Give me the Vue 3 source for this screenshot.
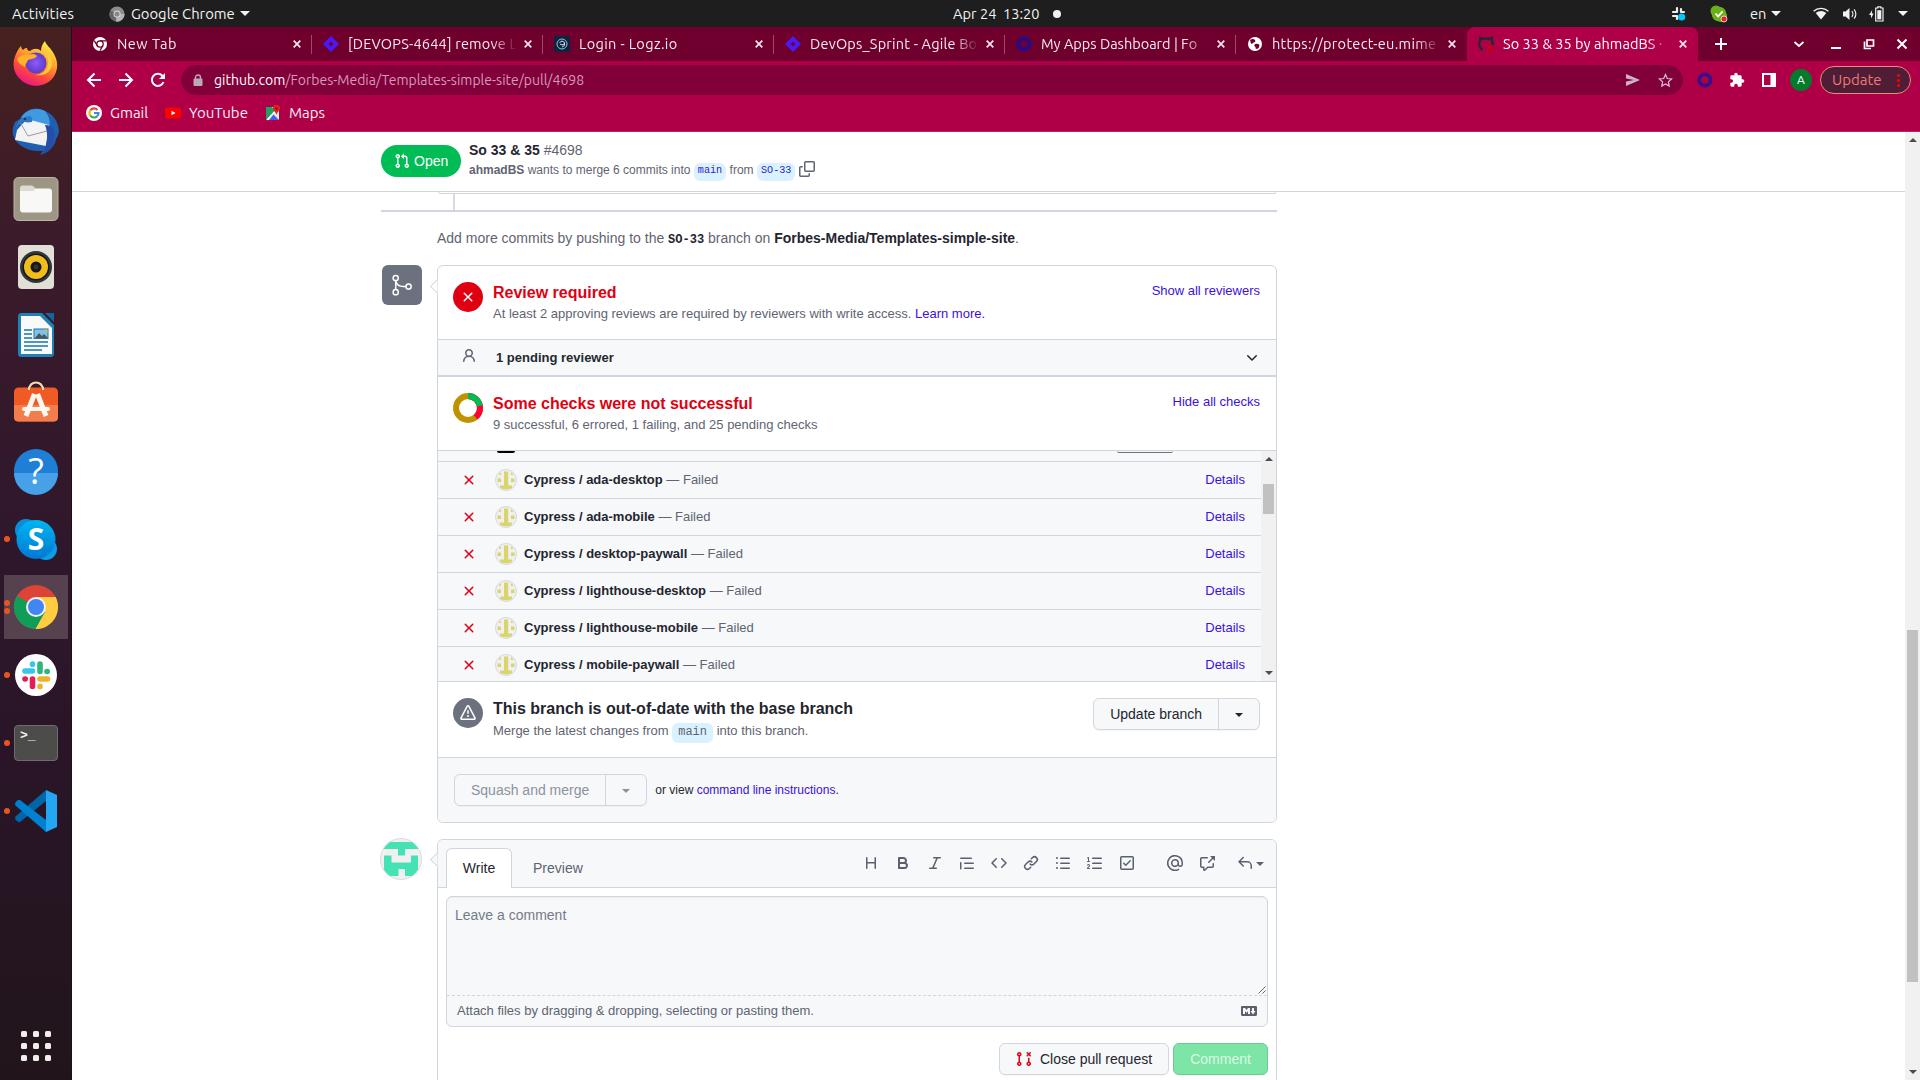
<script setup>
const icons = {
  pr: 'M1.5 3.25a2.25 2.25 0 1 1 3 2.122v5.256a2.251 2.251 0 1 1-1.5 0V5.372A2.25 2.25 0 0 1 1.5 3.25Zm5.677-.177L9.573.677A.25.25 0 0 1 10 .854V2.5h1A2.5 2.5 0 0 1 13.5 5v5.628a2.251 2.251 0 1 1-1.5 0V5a1 1 0 0 0-1-1h-1v1.646a.25.25 0 0 1-.427.177L7.177 3.427a.25.25 0 0 1 0-.354ZM3.75 2.5a.75.75 0 1 0 0 1.5.75.75 0 0 0 0-1.5Zm0 9.5a.75.75 0 1 0 0 1.5.75.75 0 0 0 0-1.5Zm8.25.75a.75.75 0 1 0 1.5 0 .75.75 0 0 0-1.5 0Z',
  x: 'M3.72 3.72a.75.75 0 0 1 1.06 0L8 6.94l3.22-3.22a.749.749 0 0 1 1.275.326.749.749 0 0 1-.215.734L9.06 8l3.22 3.22a.749.749 0 0 1-.326 1.275.749.749 0 0 1-.734-.215L8 9.06l-3.22 3.22a.751.751 0 0 1-1.042-.018.751.751 0 0 1-.018-1.042L6.94 8 3.72 4.78a.75.75 0 0 1 0-1.06Z',
  alert: 'M6.457 1.047c.659-1.234 2.427-1.234 3.086 0l6.082 11.378A1.75 1.75 0 0 1 14.082 15H1.918a1.75 1.75 0 0 1-1.543-2.575Zm1.763.707a.25.25 0 0 0-.44 0L1.698 13.132a.25.25 0 0 0 .22.368h12.164a.25.25 0 0 0 .22-.368Zm.53 3.996v2.5a.75.75 0 0 1-1.5 0v-2.5a.75.75 0 0 1 1.5 0ZM9 11a1 1 0 1 1-2 0 1 1 0 0 1 2 0Z',
  person: 'M10.561 8.073a6 6 0 0 1 3.432 5.142.75.75 0 1 1-1.498.07 4.5 4.5 0 0 0-8.99 0 .75.75 0 0 1-1.498-.07 6 6 0 0 1 3.431-5.142 3.999 3.999 0 1 1 5.123 0ZM10.5 5a2.5 2.5 0 1 0-5 0 2.5 2.5 0 0 0 5 0Z',
  chevron: 'M12.78 5.22a.749.749 0 0 1 0 1.06l-4.25 4.25a.749.749 0 0 1-1.06 0L3.22 6.28a.749.749 0 1 1 1.06-1.06L8 8.939l3.72-3.719a.749.749 0 0 1 1.06 0Z',
  copy: 'M0 6.75C0 5.784.784 5 1.75 5h1.5a.75.75 0 0 1 0 1.5h-1.5a.25.25 0 0 0-.25.25v7.5c0 .138.112.25.25.25h7.5a.25.25 0 0 0 .25-.25v-1.5a.75.75 0 0 1 1.5 0v1.5A1.75 1.75 0 0 1 9.25 16h-7.5A1.75 1.75 0 0 1 0 14.25Z M5 1.75C5 .784 5.784 0 6.75 0h7.5C15.216 0 16 .784 16 1.75v7.5A1.75 1.75 0 0 1 14.25 11h-7.5A1.75 1.75 0 0 1 5 9.25Zm1.75-.25a.25.25 0 0 0-.25.25v7.5c0 .138.112.25.25.25h7.5a.25.25 0 0 0 .25-.25v-7.5a.25.25 0 0 0-.25-.25Z',
  reply: 'M6.78 1.97a.75.75 0 0 1 0 1.06L3.81 6h6.44A4.75 4.75 0 0 1 15 10.75v2.5a.75.75 0 0 1-1.5 0v-2.5a3.25 3.25 0 0 0-3.25-3.25H3.81l2.97 2.97a.749.749 0 0 1-.326 1.275.749.749 0 0 1-.734-.215L1.47 7.28a.75.75 0 0 1 0-1.06l4.25-4.25a.75.75 0 0 1 1.06 0Z',
  markdown: 'M14.85 3c.63 0 1.15.52 1.14 1.15v7.7c0 .63-.51 1.15-1.15 1.15H1.15C.52 13 0 12.48 0 11.84V4.15C0 3.52.52 3 1.15 3ZM9 11V5H7L5.5 7 4 5H2v6h2V8l1.5 1.92L7 8v3Zm2.99.5L14.5 8H13V5h-2v3H9.5Z',
  prClosed: 'M3.25 1A2.25 2.25 0 0 1 4 5.372v5.256a2.251 2.251 0 1 1-1.5 0V5.372A2.251 2.251 0 0 1 3.25 1Zm9.5 5.5a.75.75 0 0 1 .75.75v3.378a2.251 2.251 0 1 1-1.5 0V7.25a.75.75 0 0 1 .75-.75Zm-2.03-5.273a.75.75 0 0 1 1.06 0l.97.97.97-.97a.748.748 0 0 1 1.265.332.75.75 0 0 1-.205.729l-.97.97.97.97a.751.751 0 0 1-.018 1.042.751.751 0 0 1-1.042.018l-.97-.97-.97.97a.749.749 0 0 1-1.275-.326.749.749 0 0 1 .215-.734l.97-.97-.97-.97a.75.75 0 0 1 0-1.06ZM2.5 3.25a.75.75 0 1 0 1.5 0 .75.75 0 0 0-1.5 0ZM3.25 12a.75.75 0 1 0 0 1.5.75.75 0 0 0 0-1.5Zm9.5 0a.75.75 0 1 0 0 1.5.75.75 0 0 0 0-1.5Z',
}

const editorTools = [
  'M3.75 2a.75.75 0 0 1 .75.75V7h7V2.75a.75.75 0 0 1 1.5 0v10.5a.75.75 0 0 1-1.5 0V8.5h-7v4.75a.75.75 0 0 1-1.5 0V2.75A.75.75 0 0 1 3.75 2Z',
  'M4 2h4.5a3.501 3.501 0 0 1 2.852 5.53A3.499 3.499 0 0 1 9.5 14H4a1 1 0 0 1-1-1V3a1 1 0 0 1 1-1Zm1 7v3h4.5a1.5 1.5 0 0 0 0-3Zm3.5-2a1.5 1.5 0 0 0 0-3H5v3Z',
  'M6 2.75A.75.75 0 0 1 6.75 2h6.5a.75.75 0 0 1 0 1.5h-2.505l-3.858 9H9.25a.75.75 0 0 1 0 1.5h-6.5a.75.75 0 0 1 0-1.5h2.505l3.858-9H6.75A.75.75 0 0 1 6 2.75Z',
  'M1.75 2.5h10.5a.75.75 0 0 1 0 1.5H1.75a.75.75 0 0 1 0-1.5Zm4 5h8.5a.75.75 0 0 1 0 1.5h-8.5a.75.75 0 0 1 0-1.5Zm0 5h8.5a.75.75 0 0 1 0 1.5h-8.5a.75.75 0 0 1 0-1.5ZM2.5 7.75v6a.75.75 0 0 1-1.5 0v-6a.75.75 0 0 1 1.5 0Z',
  'm11.28 3.22 4.25 4.25a.75.75 0 0 1 0 1.06l-4.25 4.25a.749.749 0 0 1-1.275-.326.749.749 0 0 1 .215-.734L13.94 8l-3.72-3.72a.749.749 0 0 1 .326-1.275.749.749 0 0 1 .734.215Zm-6.56 0a.751.751 0 0 1 1.042.018.751.751 0 0 1 .018 1.042L2.06 8l3.72 3.72a.749.749 0 0 1-.326 1.275.749.749 0 0 1-.734-.215L.47 8.53a.75.75 0 0 1 0-1.06Z',
  'm7.775 3.275 1.25-1.25a3.5 3.5 0 1 1 4.95 4.95l-2.5 2.5a3.5 3.5 0 0 1-4.95 0 .751.751 0 0 1 .018-1.042.751.751 0 0 1 1.042-.018 1.998 1.998 0 0 0 2.83 0l2.5-2.5a2.002 2.002 0 0 0-2.83-2.83l-1.25 1.25a.751.751 0 0 1-1.042-.018.751.751 0 0 1-.018-1.042Zm-4.69 9.64a1.998 1.998 0 0 0 2.83 0l1.25-1.25a.751.751 0 0 1 1.042.018.751.751 0 0 1 .018 1.042l-1.25 1.25a3.5 3.5 0 1 1-4.95-4.95l2.5-2.5a3.5 3.5 0 0 1 4.95 0 .751.751 0 0 1-.018 1.042.751.751 0 0 1-1.042.018 1.998 1.998 0 0 0-2.83 0l-2.5 2.5a1.998 1.998 0 0 0 0 2.83Z',
  'M5.75 2.5h8.5a.75.75 0 0 1 0 1.5h-8.5a.75.75 0 0 1 0-1.5Zm0 5h8.5a.75.75 0 0 1 0 1.5h-8.5a.75.75 0 0 1 0-1.5Zm0 5h8.5a.75.75 0 0 1 0 1.5h-8.5a.75.75 0 0 1 0-1.5ZM2 14a1 1 0 1 1 0-2 1 1 0 0 1 0 2Zm1-6a1 1 0 1 1-2 0 1 1 0 0 1 2 0ZM2 4a1 1 0 1 1 0-2 1 1 0 0 1 0 2Z',
  'M5 3.25a.75.75 0 0 1 .75-.75h8.5a.75.75 0 0 1 0 1.5h-8.5A.75.75 0 0 1 5 3.25Zm0 5a.75.75 0 0 1 .75-.75h8.5a.75.75 0 0 1 0 1.5h-8.5A.75.75 0 0 1 5 8.25Zm0 5a.75.75 0 0 1 .75-.75h8.5a.75.75 0 0 1 0 1.5h-8.5a.75.75 0 0 1-.75-.75ZM.924 10.32a.5.5 0 0 1-.851-.525l.001-.001.001-.002.002-.004.007-.011c.097-.144.215-.273.348-.384.228-.19.588-.392 1.068-.392.468 0 .858.181 1.126.484.259.294.377.673.377 1.038 0 .987-.686 1.495-1.156 1.845l-.047.035c-.303.225-.522.4-.654.597h1.357a.5.5 0 0 1 0 1H.5a.5.5 0 0 1-.5-.5c0-1.005.692-1.52 1.167-1.875l.035-.025c.531-.396.8-.625.8-1.078a.57.57 0 0 0-.128-.376C1.806 10.068 1.695 10 1.5 10a.658.658 0 0 0-.429.163.835.835 0 0 0-.144.153ZM2.003 2.5V6h.503a.5.5 0 0 1 0 1H.5a.5.5 0 0 1 0-1h.503V3.308l-.28.14a.5.5 0 0 1-.446-.895l1.003-.5a.5.5 0 0 1 .723.447Z',
  'M2.75 1h10.5c.966 0 1.75.784 1.75 1.75v10.5A1.75 1.75 0 0 1 13.25 15H2.75A1.75 1.75 0 0 1 1 13.25V2.75C1 1.784 1.784 1 2.75 1ZM2.5 2.75v10.5c0 .138.112.25.25.25h10.5a.25.25 0 0 0 .25-.25V2.75a.25.25 0 0 0-.25-.25H2.75a.25.25 0 0 0-.25.25Zm9.28 3.53-4.5 4.5a.75.75 0 0 1-1.06 0l-2-2a.75.75 0 0 1 1.06-1.06l1.47 1.47 3.97-3.97a.75.75 0 0 1 1.06 1.06Z',
  'M4.75 2.37a6.501 6.501 0 0 0 6.5 11.26.75.75 0 0 1 .75 1.298A7.999 7.999 0 0 1 .989 4.148 8 8 0 0 1 16 7.75v1.5a2.75 2.75 0 0 1-5.072 1.475 3.999 3.999 0 0 1-6.65-4.19A4 4 0 0 1 12 8v1.25a1.25 1.25 0 0 0 2.5 0V7.867a6.5 6.5 0 0 0-9.75-5.496ZM10.5 8a2.5 2.5 0 1 0-5 0 2.5 2.5 0 0 0 5 0Z',
  'M2.75 3.5a.25.25 0 0 0-.25.25v7.5c0 .138.112.25.25.25h2a.75.75 0 0 1 .75.75v2.19l2.72-2.72a.749.749 0 0 1 .53-.22h4.5a.25.25 0 0 0 .25-.25v-2.5a.75.75 0 0 1 1.5 0v2.5A1.75 1.75 0 0 1 13.25 13H9.06l-2.573 2.573A1.458 1.458 0 0 1 4 14.543V13H2.75A1.75 1.75 0 0 1 1 11.25v-7.5C1 2.784 1.784 2 2.75 2h5.5a.75.75 0 0 1 0 1.5ZM16 1.25v4.146a.25.25 0 0 1-.427.177L14.03 4.03l-3.75 3.75a.749.749 0 0 1-1.275-.326.749.749 0 0 1 .215-.734l3.75-3.75-1.543-1.543A.25.25 0 0 1 11.604 1h4.146a.25.25 0 0 1 .25.25Z',
]

// "track" is the letter spacing of a tab's title, in pixels
const tabs = [
  { icon: 'chrome', title: 'New Tab', track: 0.5 },
  { icon: 'jira', title: '[DEVOPS-4644] remove L', track: 0.2 },
  { icon: 'logz', title: 'Login - Logz.io', track: 0.35 },
  { icon: 'jira', title: 'DevOps_Sprint - Agile Bo', track: 0.2 },
  { icon: 'ring', title: 'My Apps Dashboard | Fo', track: 0 },
  { icon: 'globe', title: 'https://protect-eu.mime', track: 0.3 },
  { icon: 'github', title: 'So 33 & 35 by ahmadBS ·', track: 0.05, active: true },
]

const dock = [
  { app: 'firefox' }, { app: 'thunderbird' }, { app: 'files' }, { app: 'music' }, { app: 'writer' },
  { app: 'software' }, { app: 'help' }, { app: 'skype', dots: 1 }, { app: 'chrome', dots: 2, active: true },
  { app: 'slack', dots: 1 }, { app: 'terminal', dots: 1 }, { app: 'code', dots: 1 },
]

const checks = ['ada-desktop', 'ada-mobile', 'desktop-paywall', 'lighthouse-desktop', 'lighthouse-mobile', 'mobile-paywall']
</script>

<template>
  <div class="desktop">
    <header class="topbar">
      <div class="tb-left">
        <span class="activities">Activities</span>
        <svg class="tb-chrome" width="16" height="16" viewBox="0 0 16 16"><circle cx="8" cy="8" r="7.6" fill="#8d8d8d" /><path d="M8 8 1.5 4.2A7.6 7.6 0 0 0 6.5 15.4Z" fill="#666" /><path d="M8 8h7.6A7.6 7.6 0 0 1 7 15.6Z" fill="#b5b5b5" /><circle cx="8" cy="8" r="3.5" fill="#ddd" /><circle cx="8" cy="8" r="2.6" fill="#888" /></svg>
        <span class="appname">Google Chrome</span>
        <i class="tri" />
      </div>
      <div class="tb-clock"><span>Apr 24&nbsp; 13:20</span><i class="clock-dot" /></div>
      <div class="tb-right">
        <svg class="t-slack" width="16" height="16" viewBox="0 0 16 16"><g stroke="#eee" stroke-width="2.2" stroke-linecap="round"><path d="M6 2v4M2 6h3M10 3v3M10 6h3M2 10h4M6 10v3" /></g><circle cx="10.6" cy="11" r="3.600" fill="#00c8f8" /></svg>
        <svg class="t-skype" width="18" height="18" viewBox="0 0 18 18"><circle cx="6" cy="6" r="5.5" fill="#6bb01b" /><circle cx="11" cy="11" r="6" fill="#6bb01b" /><circle cx="9" cy="9" r="7.3" fill="#6bb01b" /><path d="m5.5 8.5 2.6 2.8 4.5-5" stroke="#fff" stroke-width="1.8" fill="none" /><circle cx="14" cy="14" r="3" fill="#e8202a" stroke="#fff" stroke-width=".7" /></svg>
        <span class="lang">en</span><i class="tri t-tri1" />
        <svg class="t-wifi" width="16" height="13" viewBox="0 0 16 13"><path d="M8 12.5 2.7 6a8 8 0 0 1 10.6 0Z" fill="#f2f2f2" /><path d="M.6 4.2a11 11 0 0 1 14.8 0" fill="none" stroke="#f2f2f2" stroke-width="1.4" /></svg>
        <svg class="t-vol" width="16" height="14" viewBox="0 0 16 14"><path d="M1 4.5h2.6L7.5 1v12L3.6 9.5H1Z" fill="#f2f2f2" /><path d="M9.8 4.2a4 4 0 0 1 0 5.6M12 2.4a6.6 6.6 0 0 1 0 9.2" fill="none" stroke="#f2f2f2" stroke-width="1.2" /></svg>
        <svg class="t-bat" width="16" height="16" viewBox="0 0 16 16"><path d="M3.2 4 0 9h2v3.5L4.6 7.4H2.8Z" fill="#f2f2f2" /><path d="M8.8 2V.8h3V2h2.200v13H6.7V2Z" fill="none" stroke="#f2f2f2" stroke-width="1.2" /><path d="M8.3 4.2h4v9.2h-4Z" fill="#f2f2f2" /></svg>
        <i class="tri t-tri2" />
      </div>
    </header>

    <div class="work">
      <nav class="dock">
        <div v-for="d in dock" :key="d.app" class="slot" :class="{ on: d.active }">
          <div class="dots"><i v-for="n in d.dots || 0" :key="n" /></div>
          <svg width="48" height="48" viewBox="0 0 48 48">
            <template v-if="d.app === 'firefox'">
              <defs>
                <linearGradient id="ffa" x1=".8" y1="0" x2=".3" y2="1"><stop offset="0" stop-color="#fff44f" /><stop offset=".4" stop-color="#ffa02c" /><stop offset=".7" stop-color="#ff4a3c" /><stop offset="1" stop-color="#e8128a" /></linearGradient>
                <radialGradient id="ffb"><stop offset="0" stop-color="#9059ff" /><stop offset="1" stop-color="#5b3cc4" /></radialGradient>
              </defs>
              <path d="M6 11c1-2 2-3 3-4 .3 2 1 3 2 4 2-2 3-2 4-2 .2 2 1 3 3 3 4-3 8-3 11 0 0-3 1-7 4-10 1 4 5 6 9 13 5 9 4 18-2 25-8 9-24 9-32 0C-1 31 .5 20 6 11Z" fill="url(#ffa)" />
              <circle cx="24" cy="24" r="10.5" fill="url(#ffb)" />
              <path d="M5 20c3-4 8-5 12-4 3-2 7-1 8 1-1 2-5 3-9 4-1 3-3 4-3 7-4-2-7-4-8-8Z" fill="#ffb02c" />
              <path d="M29 13c6 1 8 7 7 12-1 7-7 11-13 11 11 2 18-5 17-14-1-6-5-9-11-9Z" fill="#ffcb38" />
            </template>
            <template v-else-if="d.app === 'thunderbird'">
              <path d="M8 12C12 3 24-2 33 4c8 3 13 10 14 20-1 6-3 8-3 8-1 7-7 13-16 16l3-4C15 45 4 38 1 28c-1-5 0-9 2-13Z" fill="#1f5fb2" />
              <path d="M9 11C14 2 24 0 33 4c4 5 6 11 4 18-6 2-12-4-18-8Z" fill="#3f9ae0" />
              <path d="M15 12 37 18 34 39 3 33 5 23Z" fill="#f3f3f3" />
              <path d="m8 15 8 14 19-5" fill="none" stroke="#9b9b9b" stroke-width="1" />
              <path d="M33 18c9 0 12 8 8 20-2 5-6 8-11 9 5-8 7-19 3-29Z" fill="#2350a6" />
              <path d="M4 21c1-7 5-10 9-11l5-1c2 1 3 3 2 6-5 1-7 0-10 0-3 1-4 3-6 6Z" fill="#2b78c5" />
              <circle cx="13" cy="12" r="1.3" fill="#163c74" />
            </template>
            <template v-else-if="d.app === 'files'">
              <rect x="2" y="2.5" width="44" height="43" rx="4.5" fill="#9d9684" stroke="#bdb6a4" stroke-width="1" />
              <rect x="8" y="13.500" width="32" height="24" rx="3" fill="#f8f8f6" /><path d="M8 16v-3q0-2.500 2.500-2.500h8.500q1.500 0 2.500 1l2 2-2 2.500Z" fill="#dedad0" />
            </template>
            <template v-else-if="d.app === 'music'">
              <rect x="6" y="2" width="36" height="44" rx="4" fill="#e2dfd6" />
              <circle cx="24" cy="24" r="16" fill="#31383d" /><circle cx="24" cy="24" r="13.500" fill="#151515" /><circle cx="24" cy="24" r="12" fill="#f0bd1c" /><circle cx="24" cy="24" r="5.500" fill="#171717" /><circle cx="24" cy="24" r="2.500" fill="#333" />
            </template>
            <template v-else-if="d.app === 'writer'">
              <path d="M9.500 2H30L42 14v28.500q0 3.500-3.500 3.500h-29Q6 46 6 42.500v-37Q6 2 9.500 2Z" fill="#1d82b8" />
              <path d="M9 5h19l12 12v26H9Z" fill="#fafafa" /><path d="M33 2h9v9Z" fill="#0d6aa0" />
              <g stroke="#1677ad" stroke-width="1.700"><path d="M12 19h8M12 23h8M12 27h8M12 31h24M12 35h24M12 39h18" /></g>
              <rect x="22" y="18" width="14" height="9.500" fill="#7fc3ea" stroke="#1677ad" /><path d="m23 27 4-5 3 3 2-2 4 4Z" fill="#555" /><path d="M32 18.500h3.500V22Z" fill="#f3b51c" />
            </template>
            <template v-else-if="d.app === 'software'">
              <path d="M17 11C17 1 31 1 31 11" fill="none" stroke="#f7d9b0" stroke-width="2.200" />
              <rect x="2" y="8.500" width="44" height="34" rx="4.500" fill="#f05a24" /><path d="M2 26h44v12q0 4.500-4.500 4.500h-35Q2 42.500 2 38Z" fill="#f37d4c" />
              <path d="M17 11V8M31 11V8" stroke="#f7d9b0" stroke-width="2" />
              <g stroke="#fff8f0" stroke-linecap="round"><path d="M22.500 15 14 37M25.500 15 34 37" stroke-width="5" stroke-linecap="butt" /><path d="M12 30h24" stroke-width="4" /></g>
            </template>
            <template v-else-if="d.app === 'help'">
              <circle cx="24" cy="24" r="22" fill="#1f7fd6" /><path d="M2 26h44a22 22 0 0 1-44 0Z" fill="#47a1e8" />
              <text x="24" y="37" text-anchor="middle" font-size="36" fill="#fff" font-family="Open Sans, sans-serif">?</text>
            </template>
            <template v-else-if="d.app === 'skype'">
              <defs><linearGradient id="sk" x1="0" y1="0" x2="0" y2="1"><stop offset="0" stop-color="#00b6f0" /><stop offset="1" stop-color="#0078d4" /></linearGradient></defs>
              <circle cx="14" cy="15" r="11" fill="#0a8edb" /><circle cx="34" cy="34" r="11" fill="#0f9be6" /><circle cx="24" cy="24.500" r="19.500" fill="url(#sk)" />
              <text x="24" y="35" text-anchor="middle" font-size="30" font-weight="bold" fill="#fff" font-family="Open Sans, sans-serif">S</text>
            </template>
            <template v-else-if="d.app === 'chrome'">
              <circle cx="24" cy="24" r="22" fill="#db4437" />
              <path d="M24 24 4.900 13A22 22 0 0 0 24 46l10-17Z" fill="#0f9d58" />
              <path d="M24 14h19.600A22 22 0 0 1 23.500 46L33 29Z" fill="#ffcd40" />
              <circle cx="24" cy="24" r="10" fill="#f1f1f1" /><circle cx="24" cy="24" r="8" fill="#4285f4" />
            </template>
            <template v-else-if="d.app === 'slack'">
              <circle cx="24" cy="24" r="21" fill="#fff" />
              <g stroke-width="5.600" stroke-linecap="round">
                <path d="M13 20h7.500M20.500 13v.2" stroke="#36c5f0" /><path d="M28 13v7.500M35 20.500h.2" stroke="#2eb67d" />
                <path d="M28 28h7.500M28 35.200v.2" stroke="#ecb22e" /><path d="M20.500 28v7.500M13 28h.2" stroke="#e01e5a" />
              </g>
            </template>
            <template v-else-if="d.app === 'terminal'">
              <rect x="2.500" y="6.500" width="43" height="35" rx="3.500" fill="#4c4c4a" stroke="#6d6d6b" />
              <text x="8" y="19.500" font-size="13" font-weight="bold" fill="#f4f4f4" font-family="Liberation Mono, monospace">&gt;_</text>
            </template>
            <template v-else>
              <path d="M3.500 29.500 34 3v11L8 35q-2 1-5-3Z" fill="#0065a9" /><path d="M3.500 18.500 34 45V33L8 13q-2-1-5 3Z" fill="#0080d0" />
              <path d="M34 3 45 8v32L34 45Z" fill="#24a7f2" />
            </template>
          </svg>
        </div>
        <div class="apps"><i v-for="n in 9" :key="n" /></div>
      </nav>

      <div class="browser">
        <div class="tabstrip">
          <div v-for="(t, i) in tabs" :key="i" class="tab" :class="{ active: t.active, nosep: i === 5 }">
            <svg width="16" height="16" viewBox="0 0 16 16">
              <template v-if="t.icon === 'chrome'"><circle cx="8" cy="8" r="7" fill="#fff" /><circle cx="8" cy="8" r="3.200" fill="none" stroke="#6f002d" stroke-width="1.300" /><path d="M8 4.800h6M5.200 9.600 2.300 4.600M10.800 9.600 8 14.600" stroke="#6f002d" stroke-width="1.200" /></template>
              <template v-else-if="t.icon === 'jira'"><path d="M8 0 16 8 8 16 0 8Z" fill="#4b19f5" /><path d="m8 5.600 2.400 2.400L8 10.400 5.600 8Z" fill="#6f002d" /></template>
              <template v-else-if="t.icon === 'logz'"><rect width="16" height="16" rx="2" fill="#0b2440" /><circle cx="8" cy="8" r="5" fill="none" stroke="#9fc4d2" stroke-width="1" /><path d="M5.500 6.500 8 5l2.500 1.500v3L8 11M6 8l2 1 2-1" fill="none" stroke="#d5e8ee" stroke-width="1" /></template>
              <template v-else-if="t.icon === 'ring'"><circle cx="8" cy="8" r="5.600" fill="none" stroke="#2a0a80" stroke-width="4.400" /></template>
              <template v-else-if="t.icon === 'globe'"><circle cx="8" cy="8" r="7" fill="#fff" /><path d="M3 4q3-2 5 0 1 2-1.500 2.500Q6 8 4 7.500ZM8 8q3-1 4.500 1 0 3-2.500 4-2 0-1.500-2Q6.500 10 8 8Z" fill="#6f002d" /></template>
              <template v-else><path d="M4.500 14A7 7 0 0 1 2 5l.3-3L5 3q3-1 6 0l2.700-1L14 5q1.200 2 .8 4" fill="none" stroke="#2a2530" stroke-width="2.600" /><path d="m9.500 10 5 5m0-5-5 5" stroke="#c40010" stroke-width="1.800" /></template>
            </svg>
            <span class="tab-title" :style="{ letterSpacing: t.track + 'px' }">{{ t.title }}</span>
            <svg class="tab-x" width="8" height="8" viewBox="0 0 8 8"><path d="m.7.7 6.600 6.600m0-6.600L.7 7.300" stroke="#f6e6ec" stroke-width="1.700" /></svg>
          </div>
          <svg class="w-plus" width="12" height="12" viewBox="0 0 12 12"><path d="M6 0v12M0 6h12" stroke="#fff" stroke-width="2" /></svg>
          <div class="winctl">
            <svg width="12" height="12" viewBox="0 0 12 12"><path d="m1.500 4 4.500 4 4.500-4" fill="none" stroke="#fff" stroke-width="1.800" /></svg>
            <svg class="w-min" width="12" height="12" viewBox="0 0 12 12"><path d="M1 10h10" stroke="#fff" stroke-width="2" /></svg>
            <svg width="12" height="12" viewBox="0 0 12 12"><path d="M4 2h6.500v6H4ZM1.500 3.500v7H8" fill="none" stroke="#fff" stroke-width="1.700" /></svg>
            <svg width="12" height="12" viewBox="0 0 12 12"><path d="m1.500 1.500 9 9m0-9-9 9" stroke="#fff" stroke-width="2" /></svg>
          </div>
        </div>

        <div class="toolbar">
          <div class="navs">
            <svg width="16" height="16" viewBox="0 0 16 16"><path d="M15 8H2m6.500-6.500L2 8l6.500 6.500" fill="none" stroke="#fff" stroke-width="2" /></svg>
            <svg width="16" height="16" viewBox="0 0 16 16"><path d="M1 8h13M7.500 1.500 14 8l-6.500 6.500" fill="none" stroke="#fff" stroke-width="2" /></svg>
            <svg width="16" height="16" viewBox="0 0 16 16"><path d="M13.500 10A6 6 0 1 1 12.300 3.800L14 5.500" fill="none" stroke="#fff" stroke-width="2" /><path d="M15 1v6H9Z" fill="#fff" /></svg>
          </div>
          <div class="omnibox">
            <svg class="lock" width="10" height="12" viewBox="0 0 10 12"><path d="M2.500 5V3.500a2.500 2.500 0 0 1 5 0V5" fill="none" stroke="#b9aab4" stroke-width="1.400" /><rect x=".5" y="4.500" width="9" height="7.500" rx="1" fill="#b9aab4" /></svg>
            <span class="url"><b>github.com</b>/Forbes-Media/Templates-simple-site/pull/4698</span>
            <svg class="send" width="14" height="12" viewBox="0 0 14 12"><path d="M0 0 14 6 0 12V7.500L8 6 0 4.500Z" fill="#cdb4be" /></svg>
            <svg width="15" height="15" viewBox="0 0 16 16"><path d="m8 1.700 1.900 4.200 4.600.5-3.400 3.100.9 4.500-4-2.300-4 2.300.9-4.500L1.500 6.400l4.600-.5Z" fill="none" stroke="#d9c3cc" stroke-width="1.300" /></svg>
          </div>
          <div class="exts">
            <svg width="16" height="16" viewBox="0 0 16 16"><circle cx="8" cy="8" r="5.700" fill="none" stroke="#36108a" stroke-width="3.800" /></svg>
            <svg width="16" height="16" viewBox="0 0 24 24"><path d="M20.500 11H19V7a2 2 0 0 0-2-2h-4V3.500a2.500 2.500 0 0 0-5 0V5H4a2 2 0 0 0-2 2v3.800h1.500a2.700 2.700 0 0 1 0 5.400H2V20a2 2 0 0 0 2 2h3.800v-1.500a2.700 2.700 0 0 1 5.400 0V22H17a2 2 0 0 0 2-2v-4h1.500a2.500 2.500 0 0 0 0-5Z" fill="#fff" /></svg>
            <svg width="16" height="16" viewBox="0 0 16 16"><path d="M1 1h14v14H1ZM3 3v10h6.500V3Z" fill="#fff" fill-rule="evenodd" /></svg>
            <span class="me">A</span>
          </div>
          <div class="update"><span>Update</span><em><i /><i /><i /></em></div>
        </div>

        <div class="bookmarks">
          <svg width="16" height="16" viewBox="0 0 16 16"><circle cx="8" cy="8" r="8" fill="#fff" /><g fill="none" stroke-width="2.200"><path d="M11.500 5A4.600 4.600 0 0 0 4.200 5.500" stroke="#ea4335" /><path d="M4.200 5.500a4.600 4.600 0 0 0 0 5" stroke="#fbbc05" /><path d="M4.200 10.500a4.600 4.600 0 0 0 7 .7" stroke="#34a853" /><path d="M11.200 11.200A4.600 4.600 0 0 0 12.500 8H8" stroke="#4285f4" /></g></svg>
          <span class="bm1">Gmail</span>
          <svg width="16" height="16" viewBox="0 0 16 16"><rect y="2.500" width="16" height="11" rx="2.800" fill="#f00" /><path d="m6.500 5.700 4 2.300-4 2.300Z" fill="#fff" /></svg>
          <span class="bm2">YouTube</span>
          <svg width="16" height="16" viewBox="0 0 16 16"><rect x="1" y="2" width="13" height="13" rx="1" fill="#e8e8e8" /><path d="M1 2h6l3 4-8 9H1Z" fill="#1ea362" /><path d="m4 15 4.500-5.500L14 15Z" fill="#4a5fe8" /><path d="M2 15 13 3" stroke="#fff" stroke-width="1.200" /><path d="M11.500 0A3.500 3.500 0 0 1 15 3.500C15 6 12 7 11.500 10 11 7 8 6 8 3.500A3.500 3.500 0 0 1 11.500 0Z" fill="#e6211c" /><circle cx="11.500" cy="3.500" r="1.200" fill="#7d0f14" /></svg>
          <span>Maps</span>
        </div>

        <div class="viewport">
          <main class="page">
            <div class="sticky">
              <span class="state"><svg width="16" height="16" viewBox="0 0 16 16"><path :d="icons.pr" /></svg>Open</span>
              <div class="st-text">
                <div class="st-title"><b>So 33 &amp; 35</b> #4698</div>
                <div class="st-sub"><b>ahmadBS</b> wants to merge 6 commits into <code>main</code> from <code>SO-33</code><svg width="16" height="16" viewBox="0 0 16 16"><path :d="icons.copy" /></svg></div>
              </div>
            </div>

            <div class="content">
              <div class="prev-box" />
              <div class="tl-line" />
              <div class="tl-break" />
              <p class="push">Add more commits by pushing to the <code>SO-33</code> branch on <b>Forbes-Media/Templates-simple-site</b>.</p>

              <div class="row">
                <div class="merge-badge">
                  <svg width="24" height="24" viewBox="0 0 24 24" fill="none" stroke="#fff" stroke-width="1.500"><circle cx="5.700" cy="5" r="2.600" /><circle cx="5.700" cy="19.200" r="2.600" /><circle cx="18.600" cy="13.500" r="2.600" /><path d="M5.700 7.600v9M5.700 7.600c.8 4 3.800 5.900 7.500 5.900H16" /></svg>
                </div>
                <section class="box merge-box">
                  <div class="sec s1">
                    <div class="circ red"><svg width="16" height="16" viewBox="0 0 16 16"><path :d="icons.x" /></svg></div>
                    <div class="sec-body"><h3 class="err">Review required</h3><p>At least 2 approving reviews are required by reviewers with write access. <a>Learn more.</a></p></div>
                    <a class="act">Show all reviewers</a>
                  </div>
                  <div class="pending">
                    <svg class="ico" width="16" height="16" viewBox="0 0 16 16"><path :d="icons.person" /></svg>
                    <b>1 pending reviewer</b>
                    <svg class="chev" width="16" height="16" viewBox="0 0 16 16"><path :d="icons.chevron" /></svg>
                  </div>
                  <div class="sec s2">
                    <svg width="30" height="30" viewBox="0 0 30 30"><g fill="none" stroke-width="6" transform="rotate(-90 15 15)"><circle cx="15" cy="15" r="12" stroke="#bf9300" /><circle cx="15" cy="15" r="12" pathLength="41" stroke="#ff0035" stroke-dasharray="16 25" /><circle cx="15" cy="15" r="12" pathLength="41" stroke="#00bc54" stroke-dasharray="9 32" /></g></svg>
                    <div class="sec-body"><h3 class="err">Some checks were not successful</h3><p>9 successful, 6 errored, 1 failing, and 25 pending checks</p></div>
                    <a class="act">Hide all checks</a>
                  </div>
                  <div class="checks">
                    <div class="check-list">
                      <div class="cut"><i class="blk" /><i class="req" /></div>
                      <div v-for="c in checks" :key="c" class="check">
                        <svg class="cx" width="16" height="16" viewBox="0 0 16 16"><path :d="icons.x" /></svg>
                        <svg class="cav" width="22" height="22" viewBox="0 0 22 22"><circle cx="11" cy="11" r="10.500" fill="#eff0ef" stroke="#d6dadd" /><path d="M9 2.500h4.200v14H17V19q-6 2.500-12 0v-2.500h4ZM2.500 9.500H6V13H2.500ZM16 9.500h3.500V13H16ZM4 5l2-2v3H4ZM16 3l2 2v1h-2Z" fill="#dad46c" /></svg>
                        <span class="cname"><b>Cypress / {{ c }}</b> — Failed</span>
                        <a>Details</a>
                      </div>
                    </div>
                    <div class="sbar"><i class="up" /><i class="thumb" /><i class="down" /></div>
                  </div>
                  <div class="sec s3">
                    <div class="circ grey"><svg width="16" height="16" viewBox="0 0 16 16"><path :d="icons.alert" /></svg></div>
                    <div class="sec-body"><h3>This branch is out-of-date with the base branch</h3><p>Merge the latest changes from <code>main</code> into this branch.</p></div>
                    <div class="btns"><span class="btn b1">Update branch</span><span class="btn caret"><i /></span></div>
                  </div>
                  <div class="merge-foot">
                    <div class="btns off"><span class="btn b1">Squash and merge</span><span class="btn caret"><i /></span></div>
                    <span class="cli">or view <a>command line instructions</a>.</span>
                  </div>
                </section>
              </div>

              <div class="row row2">
                <svg class="avatar" width="42" height="42" viewBox="0 0 42 42"><defs><clipPath id="av"><circle cx="21" cy="21" r="20" /></clipPath></defs><circle cx="21" cy="21" r="20.500" fill="#f0f0f0" stroke="#d8dbe0" /><path clip-path="url(#av)" d="M4 4h34v7H25v6.500h-7V11H4ZM4 17.500h7.500v7H31v-7h7V38H25v-7h-6.500v7H4Z" fill="#44e2b4" /></svg>
                <section class="box comment-box">
                  <div class="c-head">
                    <span class="c-tab">Write</span><span class="c-tab2">Preview</span>
                    <div class="tools">
                      <svg v-for="(p, i) in editorTools" :key="i" width="16" height="16" viewBox="0 0 16 16"><path :d="p" fill-rule="evenodd" /></svg>
                      <span class="reply"><svg width="16" height="16" viewBox="0 0 16 16"><path :d="icons.reply" /></svg><i /></span>
                    </div>
                  </div>
                  <div class="field">
                    <div class="ta">Leave a comment<svg width="8" height="8" viewBox="0 0 8 8"><path d="M.5 7.500 7.500.5M4.500 7.500l3-3" stroke="#555" stroke-width=".9" /></svg></div>
                    <div class="attach"><span>Attach files by dragging &amp; dropping, selecting or pasting them.</span><svg width="16" height="16" viewBox="0 0 16 16"><path :d="icons.markdown" /></svg></div>
                  </div>
                  <div class="submit">
                    <span class="btn close"><svg width="16" height="16" viewBox="0 0 16 16"><path :d="icons.prClosed" /></svg>Close pull request</span>
                    <span class="btn go">Comment</span>
                  </div>
                </section>
              </div>
            </div>
          </main>
          <div class="pagebar"><i class="up" /><i class="thumb" /><i class="down" /></div>
        </div>
      </div>
    </div>
  </div>
</template>

<style>
html, body { margin: 0; overflow: hidden; }
</style>

<style scoped>
* { box-sizing: border-box; }
svg { display: block; flex: none; }
h3, p { margin: 0; }
.desktop { width: 1920px; height: 1080px; overflow: hidden; display: flex; flex-direction: column; font: 14px/1.5 "Liberation Sans", Arial, sans-serif; color: #24292f; }
.topbar, .tabstrip, .toolbar, .bookmarks { font-family: Ubuntu, "Noto Sans", sans-serif; font-size: 14px; white-space: nowrap; }
.topbar { height: 27px; background: #1e1e1e; color: #f2f2f2; display: grid; grid-template-columns: 953px 1fr 252px; align-items: center; line-height: 27px; font-size: 14.6px; }
.tb-left, .tb-clock, .tb-right { display: flex; align-items: center; }
.tb-left { font-size: 14.8px; }
.activities { margin-left: 12px; width: 97px; letter-spacing: .15px; }
.tb-chrome { margin-right: 6px; }
.appname { width: 109px; }
.tri { border: 5px solid transparent; border-top: 5px solid #f2f2f2; border-bottom: 0; width: 0; height: 0; }
.clock-dot { width: 8px; height: 8px; border-radius: 50%; background: #f2f2f2; margin-left: 12px; }
.tb-clock span { width: 88px; }
.t-skype { margin-left: 23px; }
.t-slack { margin-left: 3px; }
.lang { margin-left: 22px; width: 21px; }
.t-wifi { margin-left: 32px; }
.t-vol { margin-left: 13px; }
.t-bat { margin-left: 11px; }
.t-tri2 { margin-left: 13px; }

.work { flex: 1; display: flex; min-height: 0; }
.dock { width: 72px; background: linear-gradient(180deg, #47211f 0%, #3b1b2b 20%, #2f172b 50%, #291527 70%, #21151b 100%); display: flex; flex-direction: column; padding-top: 2px; border-right: 1px solid #1d0f19; }
.slot { height: 68px; display: flex; align-items: center; padding-left: 4px; }
.slot > svg { margin-left: 2px; }
.on { background: linear-gradient(#56424f, #56424f) 4px 2px / 64px 64px no-repeat; }
.dots { width: 6px; display: flex; flex-direction: column; gap: 2px; }
.dots i { width: 6px; height: 6px; border-radius: 50%; background: #e95420; }
.apps { margin: auto 0 19px 21px; display: grid; grid-template-columns: repeat(3, 6px); gap: 6px; }
.apps i { width: 6px; height: 6px; border-radius: 1.5px; background: #f1efec; }

.browser { flex: 1; display: flex; flex-direction: column; min-width: 0; }
.tabstrip { height: 34px; background: #6f002d; display: flex; align-items: center; padding-left: 9px; color: #f8e9ef; font-size: 14.5px; }
.tab { width: 231px; height: 34px; display: flex; align-items: center; padding-left: 11px; background: linear-gradient(#9d4a6b, #9d4a6b) 100% 8px / 1px 19px no-repeat; flex: none; }
.tab.nosep { background: none; }
.tab.active { background: #af0047; border-radius: 8px 8px 0 0; color: #fff; }
.tab-title { margin-left: 9px; width: 169px; mask-image: linear-gradient(90deg, #000 85%, transparent 100%); line-height: 34px; }
.tab-x { margin-left: 7px; }
.w-plus { margin-left: 17px; }
.winctl { margin-left: auto; display: flex; gap: 21px; margin-right: 12px; }
.w-min { margin-left: 4px; }
.toolbar { height: 38px; background: #af0047; display: flex; align-items: center; }
.navs { display: flex; gap: 16px; margin-left: 14px; width: 95px; }
.omnibox { width: 1502px; height: 30px; border-radius: 15px; background: #82003a; display: flex; align-items: center; color: #d59ab5; padding-right: 10px; }
.lock { margin: 0 11px 0 12px; }
.url { flex: 1; }
.url b { font-weight: 400; color: #fff; }
.send { margin-right: 18px; }
.exts { display: flex; gap: 16px; align-items: center; margin-left: 14px; }
.me { width: 22px; height: 22px; border-radius: 50%; background: #047a2c; color: #fff; font-size: 12px; line-height: 22px; text-align: center; margin-left: -3px; }
.update { margin-left: 8px; width: 91px; height: 28px; border: 1px solid #ee8d76; border-radius: 14px; background: #4f1d35; color: #ee7a74; display: flex; align-items: center; padding: 0 10px 0 11px; justify-content: space-between; font-size: 15px; }
.update em { display: flex; flex-direction: column; gap: 2px; }
.update em i { width: 3px; height: 3px; border-radius: 50%; background: #f00; }
.bookmarks { height: 33px; background: #af0047; border-bottom: 1px solid #c21c60; display: flex; align-items: center; padding: 0 0 4px 14px; color: #fbeef3; font-size: 15px; }
.bookmarks span { margin-left: 8px; }
.bm1 { width: 55px; }
.bm2 { width: 76px; }

.viewport { flex: 1; display: flex; min-height: 0; }
.page { width: 1833px; background: #fff; overflow: hidden; }
.sticky { height: 60px; border-bottom: 1px solid #d0d5df; display: flex; padding: 7px 0 0 309px; }
.state { width: 80px; height: 32px; margin-top: 6px; border-radius: 16px; background: #00bc54; color: #fff; display: flex; align-items: center; padding-left: 13px; gap: 4px; fill: #fff; }
.st-text { margin-left: 8px; }
.st-title { line-height: 21px; margin-top: 1px; color: #5f6471; }
.st-title b { color: #24252f; }
.st-sub { font-size: 12px; line-height: 18px; height: 18px; color: #5f6471; display: flex; white-space: pre; align-items: center; margin-top: 1px; padding-bottom: 2px; }
.st-sub svg { margin-left: 4px; fill: #5f6471; margin-top: -2px; }
code { font-family: "Liberation Mono", monospace; }
.st-sub code { background: #daf2ff; color: #2c1fd0; border-radius: 6px; height: 18px; padding: 0 4px; font-size: 10.2px; line-height: 15px; margin-top: 3px; }
.content { width: 896px; margin-left: 309px; }
.prev-box { margin-left: 57px; width: 838px; height: 2px; border: 1px solid #d0d5df; border-top: 0; border-radius: 0 0 4px 4px; }
.tl-line { width: 2px; height: 16px; margin-left: 72px; background: #d5d9e3; }
.tl-break { height: 2px; background: #d0d5e0; }
.push { margin: 16px 0 16px 56px; line-height: 21px; height: 21px; color: #5f6471; }
.push b, .push code { color: #24252f; font-weight: 700; }
.push code { font-size: 12px; line-height: 1; }
.row { display: flex; }
.merge-badge { width: 40px; height: 40px; margin: 0 15px 0 1px; border-radius: 6px; background: #6c717f; display: flex; align-items: center; justify-content: center; }
.box { position: relative; width: 840px; border: 1px solid #d0d5df; border-radius: 6px; background: #fff; }
.box::before { content: ""; position: absolute; left: -6px; top: 15px; width: 10px; height: 10px; background: #fff; border: solid #d0d5df; border-width: 0 0 1px 1px; transform: rotate(45deg); clip-path: polygon(0 0, 100% 100%, 0 100%); }
.comment-box::before { background: #f6f8fa; top: 14px; }
.sec { display: flex; padding: 16px 16px 0 15px; height: 73px; }
.s3 { height: 75px; }
.circ { width: 30px; height: 30px; border-radius: 50%; display: flex; align-items: center; justify-content: center; fill: #fff; flex: none; }
.red { background: #df0012; }
.grey { background: #6c717f; }
.sec-body { margin-left: 10px; margin-top: -1px; flex: 1; }
h3 { font-size: 16px; line-height: 24px; color: #24252f; }
.err { color: #df0012; }
.sec p { font-size: 13px; line-height: 20px; color: #5f6471; margin-top: -1px; }
.sec.s3 p { margin-top: 0; }
.sec p code { background: #daf2ff; border-radius: 6px; font-size: 12px; padding: 2px 6px 4px; }
a { color: #3c10e0; }
.act { font-size: 13px; line-height: 20px; margin-top: -1px; }
.pending { height: 38px; border-top: 1px solid #d0d5df; border-bottom: 2px solid #d0d5df; background: #f6f8fa; display: flex; align-items: center; font-size: 13px; }
.ico { margin: -3px 19px 0 23px; fill: #5f6471; }
.chev { margin: 0 16px 0 auto; fill: #24252f; }
.checks { height: 232px; border: solid #d0d5df; border-width: 1px 0; display: flex; }
.check-list { flex: 1; overflow: hidden; background: #f6f8fa; }
.cut { height: 10px; display: flex; align-items: flex-start; padding-left: 59px; }
.blk { width: 18px; height: 2px; background: #000; border-radius: 0 0 9px 9px; }
.req { width: 56px; height: 2px; border-bottom: 1px solid #6c717f; border-radius: 0 0 8px 8px; margin-left: 602px; }
.check { height: 37px; border-top: 1px solid #d0d5df; display: flex; align-items: center; font-size: 13px; color: #5f6471; padding-right: 16px; }
.check b { color: #24252f; }
.cx { margin-left: 23px; fill: #df0012; }
.cav { margin: 0 7px 0 18px; }
.cname { flex: 1; }
.sbar { width: 15px; background: #f1f1f1; display: flex; flex-direction: column; align-items: center; }
.up, .down { border: 4px solid transparent; width: 0; height: 0; }
.up { border-bottom-color: #4d4d4d; border-top: 0; }
.down { border-top-color: #4d4d4d; border-bottom: 0; margin-top: auto; }
.sbar .up { margin-top: 6px; }
.sbar .down { margin-bottom: 6px; }
.sbar .thumb { width: 11px; height: 30px; background: #c1c1c1; margin-top: 23px; }
.btns { display: flex; height: 32px; }
.btn { height: 32px; border: 1px solid #d3d7dc; border-radius: 6px; background: #f6f8fa; color: #24252f; line-height: 30px; display: flex; align-items: center; box-shadow: 0 1px 0 rgba(27, 31, 36, .04); }
.btns .b1 { border-radius: 6px 0 0 6px; padding: 0 16px; }
.btns .caret { border-radius: 0 6px 6px 0; margin-left: -1px; width: 42px; justify-content: center; }
.caret i, .reply i { border: 4px solid transparent; border-top-color: currentColor; border-bottom: 0; }
.caret i { margin-top: 2px; }
.off .btn { color: #8d929d; }
.merge-foot { height: 65px; border-top: 1px solid #d0d5df; background: #f6f8fa; border-radius: 0 0 6px 6px; padding: 16px; display: flex; font-size: 14px; }
.cli { font-size: 12px; line-height: 33px; margin-left: 8px; }
.row2 { margin-top: 16px; }
.avatar { margin: -1px 15px 0 -1px; }
.comment-box { height: 260px; }
.c-head { height: 48px; border-bottom: 1px solid #d0d5df; background: #f6f8fa; border-radius: 6px 6px 0 0; display: flex; padding: 8px 0 0 8px; }
.c-tab { width: 66px; height: 40px; background: #fff; border: 1px solid #d0d5df; border-bottom: 0; border-radius: 6px 6px 0 0; text-align: center; line-height: 38px; color: #24252f; }
.c-tab2 { line-height: 40px; margin-left: 21px; color: #5f6471; }
.tools { margin-left: auto; display: flex; gap: 16px; fill: #5a606e; color: #5a606e; padding: 7px 12px 0 0; }
.tools svg:nth-child(10) { margin-left: 16px; }
.reply { display: flex; margin-left: 6px; }
.reply i { margin: 7px 0 0 3px; align-self: flex-start; }
.field { margin: 8px; width: 822px; height: 131px; border: 1px solid #d0d5df; border-radius: 6px; background: #f6f8fa; box-shadow: inset 0 1px 0 rgba(208, 215, 222, .3); }
.ta { height: 99px; border-bottom: 1px dashed #d0d5df; padding: 8px; line-height: 21px; color: #757a86; display: flex; justify-content: space-between; }
.ta svg { align-self: flex-end; margin: 0 -7px -7px 0; }
.attach { display: flex; justify-content: space-between; align-items: center; height: 30px; font-size: 13px; color: #5f6471; padding: 0 10px; fill: #5a606e; }
.submit { display: flex; justify-content: flex-end; gap: 4px; padding: 8px 8px 0; }
.close { width: 170px; padding-left: 16px; gap: 8px; white-space: nowrap; }
.close svg { fill: #df0012; }
.go { width: 95px; justify-content: center; background: #7de5a6; border-color: #6ccb92; color: #dcf8e7; }
.pagebar { width: 15px; background: #f1f1f1; display: flex; flex-direction: column; align-items: center; }
.pagebar .up { margin-top: 6px; }
.pagebar .down { margin-bottom: 6px; }
.pagebar .thumb { width: 11px; height: 352px; background: #c1c1c1; margin-top: 488px; }
</style>
